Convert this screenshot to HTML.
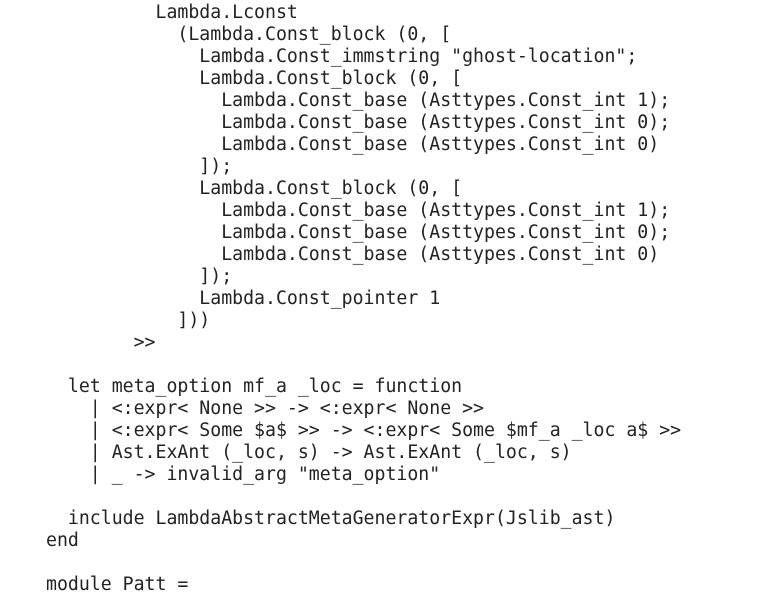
<!DOCTYPE html>
<html><head><style>
html,body{margin:0;padding:0;background:#fff;width:782px;height:597px;overflow:hidden}
pre{margin:0;position:absolute;left:46px;top:2px;font-family:"DejaVu Sans Mono","Liberation Mono",monospace;font-size:18.2px;line-height:22px;color:#222}
</style></head><body>
<pre>          Lambda.Lconst
            (Lambda.Const_block (0, [
              Lambda.Const_immstring "ghost-location";
              Lambda.Const_block (0, [
                Lambda.Const_base (Asttypes.Const_int 1);
                Lambda.Const_base (Asttypes.Const_int 0);
                Lambda.Const_base (Asttypes.Const_int 0)
              ]);
              Lambda.Const_block (0, [
                Lambda.Const_base (Asttypes.Const_int 1);
                Lambda.Const_base (Asttypes.Const_int 0);
                Lambda.Const_base (Asttypes.Const_int 0)
              ]);
              Lambda.Const_pointer 1
            ]))
        &gt;&gt;

  let meta_option mf_a _loc = function
    | &lt;:expr&lt; None &gt;&gt; -&gt; &lt;:expr&lt; None &gt;&gt;
    | &lt;:expr&lt; Some $a$ &gt;&gt; -&gt; &lt;:expr&lt; Some $mf_a _loc a$ &gt;&gt;
    | Ast.ExAnt (_loc, s) -&gt; Ast.ExAnt (_loc, s)
    | _ -&gt; invalid_arg "meta_option"

  include LambdaAbstractMetaGeneratorExpr(Jslib_ast)
end

module Patt =</pre>
</body></html>
